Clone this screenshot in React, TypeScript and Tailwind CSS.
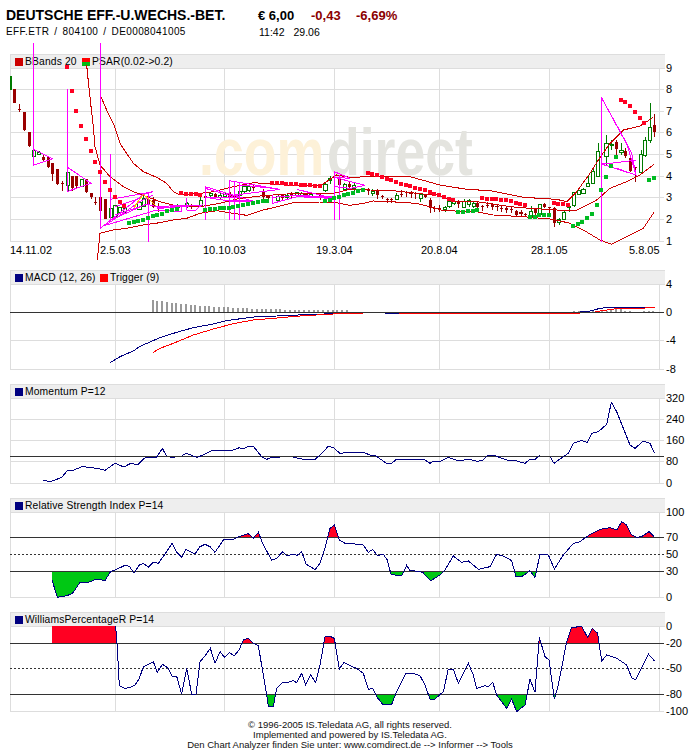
import { ReactNode } from "react";

const GRID_X = [115, 224, 334, 439, 549, 659];
const NAVY = "#000080";

// chart data is read off 3x crops of the picture: x/3 = page x, y/3 + offset = page y
const shift = (s: string) =>
  s
    .split(" ")
    .map((p) => {
      const [x, y] = p.split(",");
      return `${+x + 1050},${y}`;
    })
    .join(" ");

type Candle = [number, number, number, number, number, number];

const CANDLES_L: Candle[] = [
  [43, 87, 130, 87, 128, 0], [58, 132, 155, 147, 150, 0], [73, 156, 213, 156, 210, 0], [88, 217, 262, 217, 258, 0],
  [102, 268, 292, 270, 290, 1], [117, 274, 286, 276, 284, 1], [130, 285, 306, 292, 300, 0], [145, 290, 323, 292, 320, 0],
  [158, 308, 362, 308, 342, 0], [172, 327, 375, 327, 372, 0], [187, 362, 392, 369, 372, 0], [204, 337, 392, 337, 377, 1],
  [217, 348, 392, 348, 385, 0], [230, 348, 384, 348, 378, 0], [245, 358, 382, 358, 380, 1], [259, 358, 400, 358, 397, 0],
  [274, 398, 416, 398, 412, 0], [286, 412, 436, 427, 430, 0], [301, 412, 452, 412, 452, 0], [316, 416, 476, 416, 476, 0],
  [333, 445, 472, 445, 472, 1], [346, 437, 470, 437, 470, 1], [360, 440, 458, 442, 456, 1], [374, 442, 458, 444, 456, 1],
  [418, 425, 450, 428, 447, 1], [431, 403, 442, 415, 440, 1], [446, 405, 440, 416, 432, 0], [460, 412, 445, 420, 440, 0],
  [475, 430, 455, 440, 448, 0], [533, 433, 445, 437, 441, 1], [561, 425, 445, 430, 438, 1], [575, 433, 447, 436, 442, 0],
  [602, 405, 440, 420, 435, 1], [617, 400, 418, 407, 414, 0], [632, 396, 412, 401, 407, 1], [646, 400, 415, 403, 411, 0],
  [660, 400, 416, 405, 412, 1], [675, 398, 415, 402, 410, 1], [690, 395, 415, 403, 412, 0], [704, 395, 420, 405, 415, 0],
  [719, 388, 415, 393, 407, 1], [733, 375, 400, 380, 394, 1], [747, 375, 395, 379, 392, 1], [761, 375, 392, 378, 384, 0],
  [790, 388, 418, 392, 412, 0], [804, 405, 420, 408, 414, 0], [834, 405, 425, 409, 422, 1], [848, 402, 420, 406, 414, 0],
  [861, 402, 417, 405, 413, 1], [875, 395, 415, 399, 406, 0], [890, 395, 410, 398, 405, 1], [905, 395, 412, 400, 407, 1],
  [918, 398, 415, 402, 409, 0], [932, 400, 412, 403, 408, 1], [961, 400, 420, 404, 411, 0], [976, 365, 395, 372, 392, 1],
  [990, 348, 372, 354, 362, 1], [1018, 350, 378, 357, 376, 0], [1034, 368, 390, 372, 388, 1], [1048, 364, 388, 372, 382, 0],
];

const CANDLES_R: Candle[] = [
  [12, 370, 392, 375, 385, 1], [55, 385, 405, 390, 393, 0], [68, 388, 408, 394, 401, 1], [82, 388, 418, 392, 405, 0],
  [97, 405, 418, 407, 409, 0], [112, 415, 428, 417, 420, 0], [125, 415, 428, 417, 419, 0], [140, 400, 420, 405, 418, 1],
  [155, 390, 410, 401, 403, 0], [169, 392, 412, 396, 398, 0], [183, 394, 415, 398, 400, 0], [197, 395, 418, 398, 400, 0],
  [212, 400, 425, 403, 415, 1], [226, 402, 415, 405, 412, 0], [241, 415, 458, 419, 445, 0], [254, 438, 456, 445, 447, 0],
  [268, 436, 456, 444, 447, 0], [285, 438, 455, 442, 449, 1], [298, 418, 445, 425, 438, 1], [312, 418, 435, 424, 430, 1],
  [325, 420, 445, 427, 432, 0], [342, 418, 445, 423, 442, 1], [357, 418, 440, 421, 433, 1], [371, 422, 445, 429, 439, 1],
  [382, 425, 445, 428, 441, 0], [397, 435, 452, 438, 441, 0], [412, 425, 445, 434, 436, 0], [427, 430, 450, 433, 441, 0],
  [441, 435, 452, 439, 442, 0], [455, 438, 456, 444, 447, 0], [470, 440, 458, 445, 449, 0], [484, 442, 458, 447, 451, 0],
  [499, 450, 468, 454, 465, 0], [513, 450, 468, 456, 462, 0], [527, 460, 472, 463, 466, 0], [543, 438, 475, 454, 472, 1],
  [556, 445, 470, 447, 458, 0], [570, 432, 468, 434, 463, 1], [584, 428, 445, 431, 441, 0], [598, 440, 460, 442, 445, 0],
  [613, 440, 500, 444, 488, 0], [627, 475, 495, 479, 486, 1], [642, 450, 480, 456, 478, 1], [657, 435, 456, 438, 442, 1],
  [672, 395, 440, 397, 437, 1], [686, 390, 405, 392, 402, 1], [700, 385, 402, 388, 400, 1], [714, 348, 382, 370, 380, 1],
  [729, 325, 372, 335, 370, 1], [744, 250, 350, 273, 348, 1], [769, 225, 318, 250, 290, 1], [785, 240, 270, 253, 256, 1],
  [799, 240, 285, 245, 268, 0], [814, 250, 285, 272, 278, 1], [827, 265, 295, 272, 288, 0], [842, 290, 337, 295, 332, 0],
  [857, 320, 365, 322, 325, 0], [873, 270, 340, 283, 338, 1], [885, 230, 290, 240, 287, 1], [900, 128, 248, 202, 242, 1],
  [913, 162, 230, 196, 215, 0],
];

const SAR_RED = [
  [201, 21], [216, 93], [228, 153], [243, 198], [258, 237], [273, 272], [285, 306], [299, 336], [315, 366], [330, 390], [345, 411], [360, 425], [372, 438],
  [543, 399], [558, 401], [573, 401], [588, 402], [600, 405], [816, 369], [831, 369], [846, 369], [858, 372], [873, 372], [888, 372], [903, 375], [915, 375], [930, 375], [945, 378], [960, 378],
  [1104, 339], [1116, 342], [1131, 345], [1146, 351], [1161, 357], [1173, 360], [1188, 366], [1203, 372], [1218, 375], [1230, 378], [1245, 384], [1260, 387], [1275, 390], [1290, 396], [1302, 402], [1317, 405], [1332, 411], [1347, 417], [1359, 420],
  [1446, 414], [1461, 417], [1476, 417], [1488, 417], [1503, 420], [1518, 420], [1533, 423], [1548, 429], [1560, 432], [1575, 435],
  [1662, 429], [1674, 432], [1689, 432], [1704, 435], [1863, 120], [1875, 125], [1890, 138], [1905, 156], [1920, 174], [1932, 189],
];

const SAR_GREEN = [
  [387, 489], [402, 486], [415, 483], [429, 480], [444, 474], [459, 467], [471, 465], [486, 461], [501, 453], [516, 450], [530, 447],
  [615, 450], [630, 447], [645, 447], [660, 444], [672, 444], [687, 444], [700, 441], [714, 438], [729, 435], [744, 432], [759, 429], [774, 426], [789, 423], [801, 423],
  [975, 423], [990, 420], [1002, 414], [1017, 411], [1032, 405], [1044, 402], [1059, 399], [1074, 393], [1089, 390],
  [1374, 456], [1389, 456], [1404, 453], [1419, 453], [1431, 450], [1590, 471], [1605, 471], [1617, 465], [1632, 465], [1647, 465],
  [1719, 497], [1734, 491], [1746, 486], [1761, 474], [1776, 462], [1791, 435], [1803, 390], [1818, 351], [1833, 318], [1848, 291], [1947, 360], [1962, 354],
];

const BB_UPPER =
  "303,110 320,150 340,190 360,250 400,310 430,335 470,352 500,370 520,395 540,405 600,400 640,395 700,380 760,368 820,372 880,376 960,378 1010,345 1050,352 " +
  shift("0,352 60,350 180,350 270,375 350,388 420,392 520,412 620,418 650,425 680,395 720,340 745,300 780,250 820,210 870,198 910,172");
const BB_MID =
  "260,15 265,65 272,130 280,200 285,260 300,315 330,350 370,380 400,395 440,410 480,425 520,435 560,440 600,440 660,430 720,415 790,407 860,402 930,400 1000,400 1050,388 " +
  shift("0,388 60,390 130,392 220,402 260,405 320,425 380,425 480,440 540,445 620,450 680,450 740,420 780,385 830,365 870,345 913,312");
const BB_LOW =
  "292,600 300,520 340,510 380,505 430,495 480,488 520,480 560,475 600,460 650,452 700,460 740,466 790,450 840,438 880,428 960,426 1000,426 1050,436 " +
  shift("0,436 40,430 70,423 120,425 200,430 240,440 280,452 380,455 430,465 520,470 610,478 660,490 700,510 750,540 785,553 830,530 880,505 913,455");

const MAGENTA = [
  "100,-50 100,316 158,296 100,268",
  "203,88 203,394 273,370 203,322",
  "301,-50 301,505 430,403 460,395 332,418",
  "316,496 420,425 460,404",
  "332,283 332,480 440,432 470,440 545,436 545,455 470,450 316,496",
  "345,440 420,415",
  "345,465 420,440",
  "445,400 445,545",
  "470,445 570,435",
  "470,443 530,441",
  "560,415 560,450 585,452 605,435 480,445",
  "616,380 616,480",
  "616,380 720,412 616,412 700,425",
  "616,385 700,410",
  "688,360 688,480",
  "704,362 704,480",
  "718,366 718,480",
  "688,362 840,388 704,405 760,425 704,420",
  "688,420 760,422",
  "688,423 740,426",
  "720,375 820,385",
  "818,405 818,430 910,405 818,412",
  "890,388 1000,415 890,410 1000,410",
  "890,405 1000,413",
  "890,408 1000,416",
  "1003,335 1003,480",
  "1018,345 1018,480",
  "1003,335 1050,355 1003,352 1095,376 1050,385 1003,380",
  "1804,112 1804,545",
  "1804,112 1895,280 1908,345 1804,312 1850,308 1908,300",
  "1804,112 1880,250 1908,345 1850,325",
];

const MACD_BLUE =
  "330,293 360,275 400,258 420,244 480,218 530,202 580,188 640,177 680,167 730,160 770,155 830,153 895,150 1000,146 1050,144";
const MACD_RED =
  "460,262 480,250 520,235 580,210 640,192 700,176 760,165 830,159 900,153 1000,147 1038,145 1088,145";
const MACD_BARS = Array.from({ length: 42 }, (_, i) => ({
  x: 458 + i * 14.2,
  top: 138 - 33 * Math.exp(-i / 14),
}));
const MACD_BARS_R = [672, 686, 700, 714, 728, 742, 756, 770, 784, 798, 812, 826, 840, 882, 896, 910];

const MOM = [
  "130,646 150,650 165,645 185,637 203,616 220,616 245,605 270,607 295,611 315,616 345,595 372,606 390,596 415,598 432,580 445,576 470,576 487,550 500,574",
  "510,577 525,577",
  "545,572 560,565 590,577 610,570 640,555 680,555 700,555 718,548 730,552 745,544 760,544 785,575 800,583 815,577 840,577",
  "880,577 910,583 945,583 960,570 985,544 1000,548 1020,565 1050,562 " +
    shift("0,562 20,564 40,562 60,570 75,570 95,585 110,595 125,595 140,582 220,582 240,595 250,589 270,589 295,577 325,587 360,583 380,589 397,587 413,571 432,571 470,585 490,585 525,595 540,583 555,583 570,571"),
  shift("600,575 612,595 640,575 655,565 670,535 695,526 712,533 725,505 745,500 770,478 784,412 800,440 840,540 855,550 880,528 900,535 913,563"),
];

const RSI =
  "156,255 172,307 200,302 217,296 240,262 265,262 290,252 315,257 332,229 345,225 375,211 388,214 402,235 418,210 430,205 445,216 460,202 475,205 500,170 516,145 530,172 545,187 558,163 585,177 600,155 615,148 630,155 645,172 672,132 695,135 717,125 745,116 760,130 775,112 790,150 815,195 830,190 848,170 860,182 885,177 890,182 905,170 918,207 945,224 960,205 975,160 990,100 1003,90 1018,135 1035,145 1050,146 " +
  shift("0,145 40,150 55,172 68,163 82,182 100,178 112,195 123,238 155,243 170,211 180,227 190,227 218,232 242,257 270,240 285,225 310,183 335,202 355,198 385,223 420,215 440,178 460,183 485,197 498,245 515,245 540,227 555,247 570,178 595,180 613,222 640,180 670,145 690,140 720,118 750,103 780,98 800,105 815,80 830,90 845,120 860,127 875,125 897,110 913,125");

const WPR =
  "347,394 352,460 358,572 375,580 390,578 405,570 418,550 430,515 460,500 472,532 487,508 503,518 517,546 530,544 545,597 560,520 575,597 588,597 600,500 615,483 631,460 645,505 660,470 673,487 688,473 703,482 717,465 730,435 745,430 760,445 775,452 800,600 805,634 820,634 830,580 848,563 865,562 880,557 890,563 905,535 917,570 932,540 947,563 960,510 975,425 990,424 1003,430 1018,522 1032,502 1050,512 " +
  shift("20,520 40,535 55,583 68,580 80,605 100,630 125,628 140,590 168,535 190,535 210,542 225,570 240,612 255,612 280,590 295,522 310,522 325,565 355,505 370,540 380,580 405,572 415,575 428,562 440,600 470,640 485,612 500,650 525,630 540,553 555,592 568,427 585,485 597,495 613,612 625,570 650,440 665,397 695,395 713,427 727,400 743,415 755,498 770,480 800,490 830,510 845,548 857,555 895,477 913,497");

function Legend({ color, split, label, className }: { color?: string; split?: boolean; label: string; className?: string }) {
  return (
    <span className={`flex items-center ${className ?? ""}`}>
      {split ? (
        <span className="flex flex-col w-2 h-2 mr-[2px]">
          <span className="h-1 bg-[#ff0000]" />
          <span className="h-1 bg-[#00bb11]" />
        </span>
      ) : (
        <span className="w-2 h-2 mr-[2px]" style={{ background: color }} />
      )}
      <span>{label}</span>
    </span>
  );
}

// one chart block: legend bar on top, plot below it; the plot svg uses page coordinates
function Panel({ top, height, legend, className, children }: { top: number; height: number; legend: ReactNode; className: string; children: ReactNode }) {
  return (
    <div className={className}>
      <div className="flex items-center w-[655px] h-[15px] pl-[4px] box-border bg-[#eeeeee] border-y border-l border-[#dddddd] text-[10.3px] tracking-[0.15px] text-black">
        {legend}
      </div>
      <svg
        width={690}
        height={height}
        viewBox={`10 ${top} 690 ${height}`}
        shapeRendering="crispEdges"
        className="block overflow-visible"
      >
        {children}
      </svg>
    </div>
  );
}

function Grid({ top, bottom, ys }: { top: number; bottom: number; ys: number[] }) {
  return (
    <g stroke="#dddddd" strokeWidth={1}>
      <line x1={10.5} x2={10.5} y1={top} y2={bottom} />
      {GRID_X.map((x) => (
        <line key={x} x1={x + 0.5} x2={x + 0.5} y1={top} y2={bottom} />
      ))}
      {ys.map((y) => (
        <line key={y} x1={10} x2={664} y1={y + 0.5} y2={y + 0.5} />
      ))}
      <line x1={10} x2={664} y1={bottom - 0.5} y2={bottom - 0.5} />
    </g>
  );
}

function Ticks({ items }: { items: [string, number][] }) {
  return (
    <g fontSize={11} fill="#000">
      {items.map(([t, y]) => (
        <text key={t} x={666} y={y + 4}>
          {t}
        </text>
      ))}
    </g>
  );
}

function Level({ y, dashed }: { y: number; dashed?: boolean }) {
  return <line x1={10} x2={664} y1={y + 0.5} y2={y + 0.5} stroke="#333333" strokeWidth={1} strokeDasharray={dashed ? "2 2" : undefined} />;
}

// z maps crop coordinates to the page
function Z({ y, children }: { y: number; children: ReactNode }) {
  return <g transform={`translate(0 ${y}) scale(${1 / 3})`}>{children}</g>;
}

function Line({ points, color = NAVY }: { points: string; color?: string }) {
  return <polyline points={points} fill="none" stroke={color} strokeWidth={3} />;
}

function Candles({ data, dx = 0 }: { data: Candle[]; dx?: number }) {
  return (
    <>
      {data.map(([x, hi, lo, a, b, up], i) => {
        const c = up ? "#007a00" : "#990000";
        return (
          <g key={i}>
            <line x1={x + dx} x2={x + dx} y1={hi} y2={lo} stroke={c} strokeWidth={3} />
            {up ? (
              <rect x={x + dx - 5} y={a} width={10} height={Math.max(b - a, 3)} fill="#fff" stroke={c} strokeWidth={3} />
            ) : (
              <rect x={x + dx - 5} y={a} width={10} height={Math.max(b - a, 3)} fill={c} />
            )}
          </g>
        );
      })}
    </>
  );
}

function Band({ id, points, base, first, last, above, color }: { id: string; points: string; base: number; first: number; last: number; above: boolean; color: string }) {
  return (
    <>
      <clipPath id={id}>
        <rect x={0} y={above ? -100 : base} width={2100} height={above ? base + 100 : 400} />
      </clipPath>
      <polygon points={`${points} ${last},${base} ${first},${base}`} fill={color} clipPath={`url(#${id})`} />
    </>
  );
}

export default function App() {
  return (
    <div className="w-[700px] h-[750px] bg-white overflow-hidden font-['Liberation_Sans',Arial,sans-serif] text-black">
      <div className="flex pl-[6px] pt-[8px] h-[54px]">
        <div className="w-[252px]">
          <div className="text-[14px] font-bold leading-[15px] whitespace-nowrap">DEUTSCHE EFF.-U.WECHS.-BET.</div>
          <div className="flex gap-[5px] text-[10px] leading-[12px] mt-[3px] tracking-[0.4px] whitespace-nowrap">
            <span>EFF.ETR</span>
            <span>/</span>
            <span>804100</span>
            <span>/</span>
            <span>DE0008041005</span>
          </div>
        </div>
        <div>
          <div className="flex text-[13px] font-bold leading-[15px]">
            <span className="w-[53px]">€ 6,00</span>
            <span className="w-[45px] text-[#8b0000]">-0,43</span>
            <span className="text-[#8b0000]">-6,69%</span>
          </div>
          <div className="flex gap-[9px] ml-[1px] text-[10.5px] leading-[12px] mt-[3px]">
            <span>11:42</span>
            <span>29.06</span>
          </div>
        </div>
      </div>

      <Panel
        className="ml-[10px]"
        top={69}
        height={173}
        legend={
          <>
            <Legend color="#cc0000" label="BBands 20" className="w-[67px]" />
            <Legend split label="PSAR(0.02->0.2)" />
          </>
        }
      >
        <Grid top={69} bottom={242} ys={[89, 111, 132, 154, 176, 197, 219]} />
        <g shapeRendering="auto" className="blur-[0.7px]" fontSize={67} fontWeight={700}>
          <text transform="translate(199 175) scale(0.8 1)" fill="#fdf1d8">.com</text>
          <text transform="translate(327 175) scale(0.8 1)" fill="#e4e4df">direct</text>
        </g>
        <Z y={60}>
          <rect x={30} y={48} width={6} height={42} fill="#007a00" />
          <Candles data={CANDLES_L} />
          <Candles data={CANDLES_R} dx={1050} />
          <Line points={BB_UPPER} color="#cc0000" />
          <Line points={BB_MID} color="#cc0000" />
          <Line points={BB_LOW} color="#cc0000" />
          {MAGENTA.map((p) => (
            <Line key={p} points={p} color="#ff00ff" />
          ))}
          <Line points="402,445 410,430 430,403 450,420 468,438" color="#ffc000" />
          {SAR_RED.map(([x, y]) => (
            <rect key={`${x}-${y}`} x={x - 6} y={y - 6} width={12} height={12} fill="#ff0022" />
          ))}
          {SAR_GREEN.map(([x, y]) => (
            <rect key={`${x}-${y}`} x={x - 6} y={y - 6} width={12} height={12} fill="#00bb22" />
          ))}
        </Z>
        <Ticks items={[["9", 68], ["8", 89], ["7", 111], ["6", 132], ["5", 154], ["4", 176], ["3", 197], ["2", 219], ["1", 241]]} />
        <g fontSize={11} fill="#000">
          <text x={10} y={254}>14.11.02</text>
          <text x={100} y={254}>2.5.03</text>
          <text x={203} y={254}>10.10.03</text>
          <text x={316} y={254}>19.3.04</text>
          <text x={421} y={254}>20.8.04</text>
          <text x={531} y={254}>28.1.05</text>
          <text x={629} y={254}>5.8.05</text>
        </g>
      </Panel>

      <Panel
        className="ml-[10px] mt-[28px]"
        top={285}
        height={85}
        legend={
          <>
            <Legend color={NAVY} label="MACD (12, 26)" className="w-[85px]" />
            <Legend color="#ff0000" label="Trigger (9)" />
          </>
        }
      >
        <Grid top={285} bottom={370} ys={[340]} />
        <Z y={265}>
          {MACD_BARS.map((b) => (
            <rect key={b.x} x={b.x - 3} y={b.top} width={6} height={142 - b.top} fill="#999999" />
          ))}
          {MACD_BARS_R.map((x) => (
            <rect key={x} x={x + 1050 - 3} y={x > 780 && x < 815 ? 133 : 137} width={6} height={x > 780 && x < 815 ? 9 : 5} fill="#999999" />
          ))}
        </Z>
        <Level y={312} />
        <Z y={265}>
          <Line points={MACD_BLUE} />
          <Line points={MACD_RED} color="#ff0000" />
          <Line points="1155,145 1198,145" />
          <Line points="1198,144 1740,144" color="#ff0000" />
          <Line points={shift("690,140 720,138 750,130 780,127 850,127 875,127 905,127")} />
          <Line points={shift("735,140 770,135 800,131 870,130 915,127")} color="#ff0000" />
        </Z>
        <Ticks items={[["4", 284], ["0", 312], ["-4", 340], ["-8", 369]]} />
      </Panel>

      <Panel
        className="ml-[10px] mt-[14px]"
        top={399}
        height={85}
        legend={<Legend color={NAVY} label="Momentum P=12" />}
      >
        <Grid top={399} bottom={484} ys={[419, 440, 461]} />
        <Level y={456} />
        <Z y={265}>
          {MOM.map((p) => (
            <Line key={p} points={p} />
          ))}
        </Z>
        <Ticks items={[["320", 398], ["240", 419], ["160", 440], ["80", 461], ["0", 483]]} />
      </Panel>

      <Panel
        className="ml-[10px] mt-[14px]"
        top={513}
        height={85}
        legend={<Legend color={NAVY} label="Relative Strength Index P=14" />}
      >
        <Grid top={513} bottom={598} ys={[]} />
        <Z y={495}>
          <Band id="rsi-hi" points={RSI} base={127} first={156} last={1963} above color="#ff0022" />
          <Band id="rsi-lo" points={RSI} base={229} first={156} last={1963} above={false} color="#00c814" />
        </Z>
        <Level y={537} />
        <Level y={554} dashed />
        <Level y={571} />
        <Z y={495}>
          <Line points={RSI} />
        </Z>
        <Ticks items={[["100", 512], ["70", 537], ["50", 554], ["30", 571], ["0", 597]]} />
      </Panel>

      <Panel
        className="ml-[10px] mt-[14px]"
        top={627}
        height={85}
        legend={<Legend color={NAVY} label="WilliamsPercentageR P=14" />}
      >
        <Grid top={627} bottom={712} ys={[]} />
        <Z y={495}>
          <rect x={156} y={394} width={191} height={51} fill="#ff0022" />
          <Band id="wpr-hi" points={WPR} base={445} first={347} last={1963} above color="#ff0022" />
          <Band id="wpr-lo" points={WPR} base={598} first={347} last={1963} above={false} color="#00c814" />
        </Z>
        <Level y={643} />
        <Level y={668} dashed />
        <Level y={694} />
        <Z y={495}>
          <Line points={WPR} />
        </Z>
        <Ticks items={[["0", 626], ["-20", 643], ["-50", 668], ["-80", 694], ["-100", 711]]} />
      </Panel>

      <div className="mt-[8px] text-center text-[9.5px] leading-[10px] text-[#111111]">
        <div>© 1996-2005 IS.Teledata AG, all rights reserved.</div>
        <div>Implemented and powered by IS.Teledata AG.</div>
        <div>Den Chart Analyzer finden Sie unter: www.comdirect.de --&gt; Informer --&gt; Tools</div>
      </div>
    </div>
  );
}
